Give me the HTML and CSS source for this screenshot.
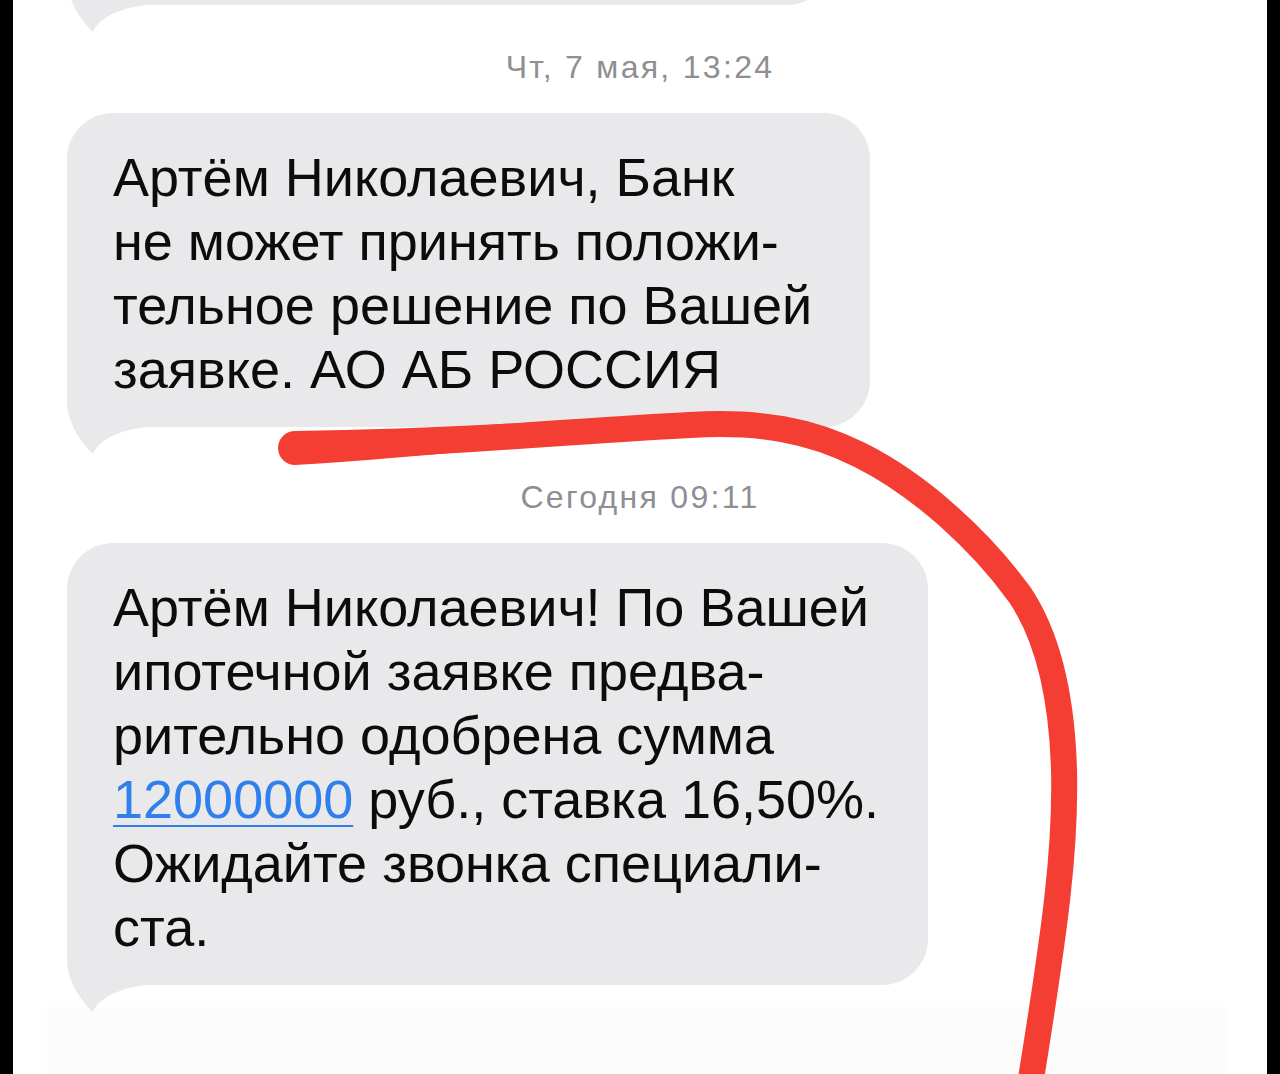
FILE: index.html
```html
<!DOCTYPE html>
<html lang="ru">
<head>
<meta charset="utf-8">
<title>Сообщения</title>
<link rel="stylesheet" href="styles.css">
</head>
<body>
<div class="screen">
  <div class="thread">
    <div class="bubble bubble-top">
      <svg class="tail" viewBox="0 0 80 80" width="80" height="80"><path d="M0,0 L0,25 C0,45 14,66 26,77 C30,66 46,54 80,50 L80,0 Z"/></svg>
    </div>

    <div class="stamp">Чт, 7 мая, 13:24</div>

    <div class="bubble bubble-one">
      <svg class="tail" viewBox="0 0 80 80" width="80" height="80"><path d="M0,0 L0,25 C0,45 14,66 26,77 C30,66 46,54 80,50 L80,0 Z"/></svg>
      <span class="ln">Артём Николаевич, Банк</span>
      <span class="ln">не может принять положи-</span>
      <span class="ln">тельное решение по Вашей</span>
      <span class="ln">заявке. АО АБ РОССИЯ</span>
    </div>

    <div class="stamp stamp-two">Сегодня 09:11</div>

    <div class="bubble bubble-two">
      <svg class="tail" viewBox="0 0 80 80" width="80" height="80"><path d="M0,0 L0,25 C0,45 14,66 26,77 C30,66 46,54 80,50 L80,0 Z"/></svg>
      <span class="ln">Артём Николаевич! По Вашей</span>
      <span class="ln">ипотечной заявке предва-</span>
      <span class="ln">рительно одобрена сумма</span>
      <span class="ln"><a class="num" href="#">12000000</a> руб., ставка 16,50%.</span>
      <span class="ln">Ожидайте звонка специали-</span>
      <span class="ln">ста.</span>
    </div>

    <div class="fade"></div>
  </div>

  <svg class="scribble" viewBox="13 0 1254 1074" width="1254" height="1074">
    <path class="pen" d="M295,448 C400,446 560,432 690,425 C760,421 810,430 860,455 C920,485 980,540 1020,595 C1050,640 1062,700 1064,770 C1066,850 1055,930 1030,1085"/>
    <path class="pen-fill" d="M295,431 C380,430 480,426 588,419 L588,443 C480,449 380,460 295,465 A17,17 0 0 1 295,431 Z"/>
  </svg>
</div>
</body>
</html>
```

FILE: styles.css
```css
* {
  box-sizing: border-box;
}

html, body {
  margin: 0;
  padding: 0;
  background: #000;
}

body {
  width: 1280px;
  height: 1074px;
  overflow: hidden;
}

.screen {
  position: relative;
  width: 1254px;
  height: 1074px;
  margin: 0 auto;
  background: #ffffff;
  overflow: hidden;
}

.thread {
  display: flex;
  flex-direction: column;
  align-items: flex-start;
  padding-left: 54px;
  font-family: "Liberation Sans", Arial, sans-serif;
}

.bubble {
  position: relative;
  display: flex;
  flex-direction: column;
  background: #e9e9eb;
  border-radius: 46px;
  padding: 32px 0 26px 46px;
  color: #0c0c0c;
  font-size: 54px;
  line-height: 64px;
}

.bubble .tail {
  position: absolute;
  left: 0;
  bottom: -30px;
  fill: #e9e9eb;
  z-index: 0;
}

.bubble-top {
  width: 766px;
  height: 100px;
  margin-top: -95px;
}

.bubble-one {
  width: 803px;
  margin-top: 28px;
}

.bubble-two {
  width: 861px;
  margin-top: 28px;
}

.ln {
  position: relative;
  z-index: 1;
  display: block;
  white-space: nowrap;
}

.num {
  color: #2f80ec;
  text-decoration: underline;
  text-decoration-thickness: 2px;
  text-underline-offset: 7px;
}

.stamp {
  align-self: center;
  margin-left: -54px;
  margin-top: 44px;
  font-size: 32px;
  line-height: 36px;
  letter-spacing: 2.3px;
  color: #8e8e93;
}

.stamp-two {
  margin-top: 52px;
}

.fade {
  width: 1180px;
  height: 70px;
  margin-top: 22px;
  margin-left: -20px;
  background: #fcfcfc;
}

.scribble {
  position: absolute;
  left: 0;
  top: 0;
  pointer-events: none;
}

.pen {
  fill: none;
  stroke: #f43e33;
  stroke-width: 26;
  stroke-linecap: round;
  stroke-linejoin: round;
}

.pen-fill {
  fill: #f43e33;
}
```
